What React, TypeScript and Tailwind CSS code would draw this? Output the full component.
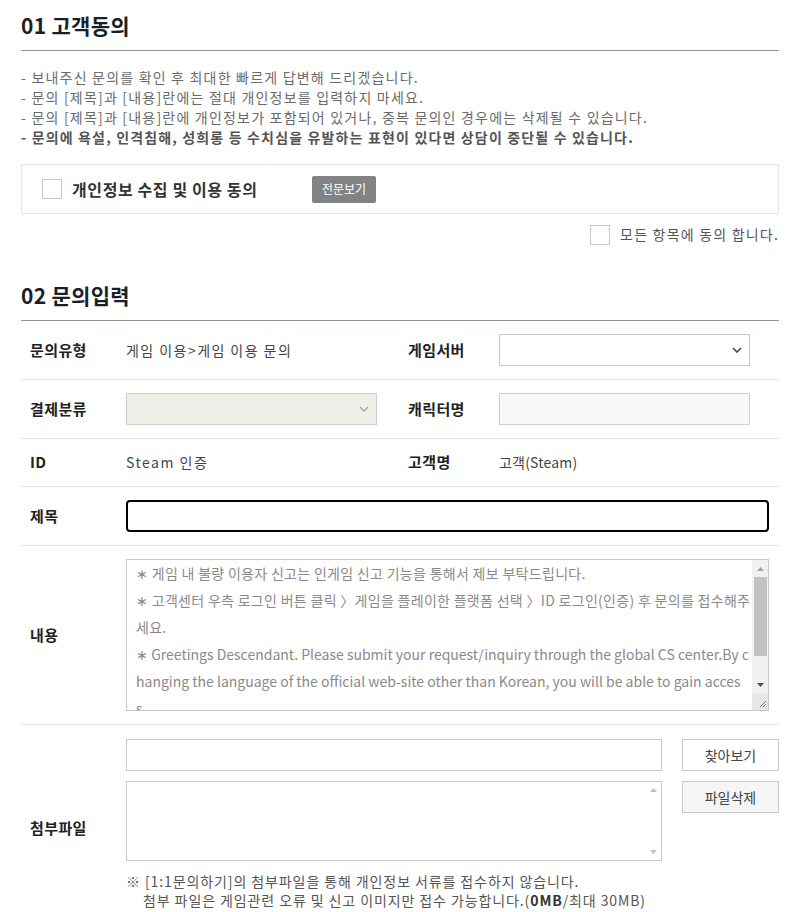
const font = { fontFamily: '"Noto Sans CJK KR", "Noto Sans", sans-serif' }

const Row = ({ className = '', children }: { className?: string; children: React.ReactNode }) => (
  <div className={`grid grid-cols-[105px_282px_91px_1fr] items-center border-b border-[#e5e5e5] ${className}`}>
    {children}
  </div>
)

const Label = ({ children, pad = true }: { children: React.ReactNode; pad?: boolean }) => (
  <div className={`${pad ? 'pl-[9px]' : ''} text-[15px] font-bold tracking-[0.4px] text-[#222]`}>{children}</div>
)

const Chevron = ({ color = '#555' }: { color?: string }) => (
  <svg width="10" height="6" viewBox="0 0 10 6" className="absolute right-[7px] top-1/2 -translate-y-1/2">
    <path d="M1 1l4 4 4-4" fill="none" stroke={color} strokeWidth="1.6" />
  </svg>
)

// textarea content, broken where the reference wraps it
const contentLines = [
  { text: '∗ 게임 내 불량 이용자 신고는 인게임 신고 기능을 통해서 제보 부탁드립니다.', ko: true },
  { text: '∗ 고객센터 우측 로그인 버튼 클릭 〉게임을 플레이한 플랫폼 선택 〉ID 로그인(인증) 후 문의를 접수해주', ko: true },
  { text: '세요.', ko: true },
  { text: '∗ Greetings Descendant. Please submit your request/inquiry through the global CS center.By c', ko: false },
  { text: 'hanging the language of the official web-site other than Korean, you will be able to gain acces', ko: false },
  { text: 's', ko: false },
]

const App = () => {
  return (
    <div className="bg-white w-[798px] h-[912px] overflow-hidden pl-[21px] pr-[19px] pt-[11px] text-[#333]" style={font}>
      {/* 01 */}
      <h2 className="text-[21px] font-bold tracking-[0.3px] text-[#1b1f29] leading-[28px] pb-[11px] border-b border-[#8c95a3]">01 고객동의</h2>
      <ul className="mt-[16px] text-[14px] tracking-[1.2px] leading-[20px] text-[#6b6b6b]">
        <li>- 보내주신 문의를 확인 후 최대한 빠르게 답변해 드리겠습니다.</li>
        <li>- 문의 [제목]과 [내용]란에는 절대 개인정보를 입력하지 마세요.</li>
        <li>- 문의 [제목]과 [내용]란에 개인정보가 포함되어 있거나, 중복 문의인 경우에는 삭제될 수 있습니다.</li>
        <li className="font-bold tracking-[1.15px] text-[#555]">- 문의에 욕설, 인격침해, 성희롱 등 수치심을 유발하는 표현이 있다면 상담이 중단될 수 있습니다.</li>
      </ul>
      <div className="mt-[17px] h-[50px] border border-[#e5e5e5] flex items-center pl-[20px]">
        <span className="w-[20px] h-[20px] border border-[#c8c8c8] bg-white" />
        <span className="ml-[10px] text-[16px] font-bold tracking-[0.6px] text-[#333] w-[240px]">개인정보 수집 및 이용 동의</span>
        <button className="h-[27px] w-[64px] rounded-[2px] bg-[#808285] text-white text-[12px]">전문보기</button>
      </div>
      <div className="mt-[10px] flex items-center justify-end">
        <span className="w-[20px] h-[20px] border border-[#c8c8c8] bg-white" />
        <span className="ml-[10px] text-[14px] tracking-[1.2px] text-[#555]">모든 항목에 동의 합니다.</span>
      </div>

      {/* 02 */}
      <h2 className="mt-[36px] text-[21px] font-bold tracking-[0.3px] text-[#1b1f29] leading-[28px] pb-[11px] border-b border-[#8c95a3]">02 문의입력</h2>

      <Row className="h-[59px]">
        <Label>문의유형</Label>
        <div className="text-[14px] tracking-[1.45px] text-[#444]">게임 이용&gt;게임 이용 문의</div>
        <Label pad={false}>게임서버</Label>
        <div className="relative w-[251px] h-[32px] border border-[#c8c8c8] bg-white">
          <Chevron color="#444" />
        </div>
      </Row>
      <Row className="h-[59px]">
        <Label>결제분류</Label>
        <div className="relative w-[251px] h-[32px] border border-[#cfcfcf] bg-[#efefea]">
          <Chevron color="#aaa" />
        </div>
        <Label pad={false}>캐릭터명</Label>
        <div className="w-[251px] h-[32px] border border-[#cfcfcf] bg-[#f8f8f8]" />
      </Row>
      <Row className="h-[48px]">
        <Label>ID</Label>
        <div className="text-[14px] tracking-[1.5px] text-[#444]">Steam 인증</div>
        <Label pad={false}>고객명</Label>
        <div className="text-[14px] tracking-[0.2px] text-[#444]">고객(Steam)</div>
      </Row>
      <div className="flex items-center h-[59px] border-b border-[#e5e5e5]">
        <div className="w-[105px]"><Label>제목</Label></div>
        <input className="w-[643px] h-[32px] border-2 border-black rounded-[4px] outline-none px-2" />
      </div>
      <div className="flex items-center h-[179px] border-b border-[#e5e5e5]">
        <div className="w-[105px]"><Label>내용</Label></div>
        <div className="w-[643px] h-[152px] border border-[#c8c8c8] flex overflow-hidden">
          <div className="flex-1 pl-[9px] text-[14px] leading-[27px] text-[#8a8a8a] whitespace-nowrap overflow-hidden">
            {contentLines.map((l, i) => (
              <div key={i} className={l.ko ? 'tracking-[0.3px]' : 'tracking-[0px]'}>{l.text}</div>
            ))}
          </div>
          <div className="w-[16px] bg-[#f1f1f1] flex flex-col items-center">
            <div className="h-[17px] flex items-center justify-center">
              <svg width="7" height="4" viewBox="0 0 7 4"><path d="M0 4L3.5 0 7 4z" fill="#a3a3a3" /></svg>
            </div>
            <div className="w-[13px] h-[79px] bg-[#c1c1c1]" />
            <div className="flex-1" />
            <div className="h-[17px] flex items-center justify-center">
              <svg width="7" height="4" viewBox="0 0 7 4"><path d="M0 0L3.5 4 7 0z" fill="#505050" /></svg>
            </div>
            <div className="w-[16px] h-[17px] bg-[#e6e6e6] relative">
              <svg width="16" height="16" viewBox="0 0 16 16" className="absolute inset-0">
                <path d="M14 8L8 14M14 11L11 14" stroke="#777" strokeWidth="1" />
              </svg>
            </div>
          </div>
        </div>
      </div>
      <div className="flex">
        <div className="w-[105px] shrink-0 pt-[92px]"><Label>첨부파일</Label></div>
        <div className="w-[536px] shrink-0 pt-[14px]">
          <div className="h-[32px] border border-[#c8c8c8] bg-white" />
          <div className="mt-[10px] h-[80px] border border-[#c8c8c8] bg-white relative">
            <div className="absolute right-0 top-0 bottom-0 w-[16px] flex flex-col items-center justify-between py-[6px]">
              <svg width="7" height="4" viewBox="0 0 7 4"><path d="M0 4L3.5 0 7 4z" fill="#c1c1c1" /></svg>
              <svg width="7" height="4" viewBox="0 0 7 4"><path d="M0 0L3.5 4 7 0z" fill="#c1c1c1" /></svg>
            </div>
          </div>
          <p className="mt-[11px] text-[14px] tracking-[0.9px] leading-[19px] text-[#555] whitespace-nowrap">
            ※ [1:1문의하기]의 첨부파일을 통해 개인정보 서류를 접수하지 않습니다.
            <br />
            <span className="pl-[17px]">첨부 파일은 게임관련 오류 및 신고 이미지만 접수 가능합니다.(<b className="text-[#333]">0MB</b>/최대 30MB)</span>
          </p>
        </div>
        <div className="ml-[20px] pt-[14px] flex flex-col gap-[10px]">
          <button className="w-[97px] h-[32px] border border-[#c8c8c8] bg-white text-[14px] text-[#444]">찾아보기</button>
          <button className="w-[97px] h-[32px] border border-[#c8c8c8] bg-[#f5f5f5] text-[14px] text-[#444]">파일삭제</button>
        </div>
      </div>
    </div>
  )
}

export default App
